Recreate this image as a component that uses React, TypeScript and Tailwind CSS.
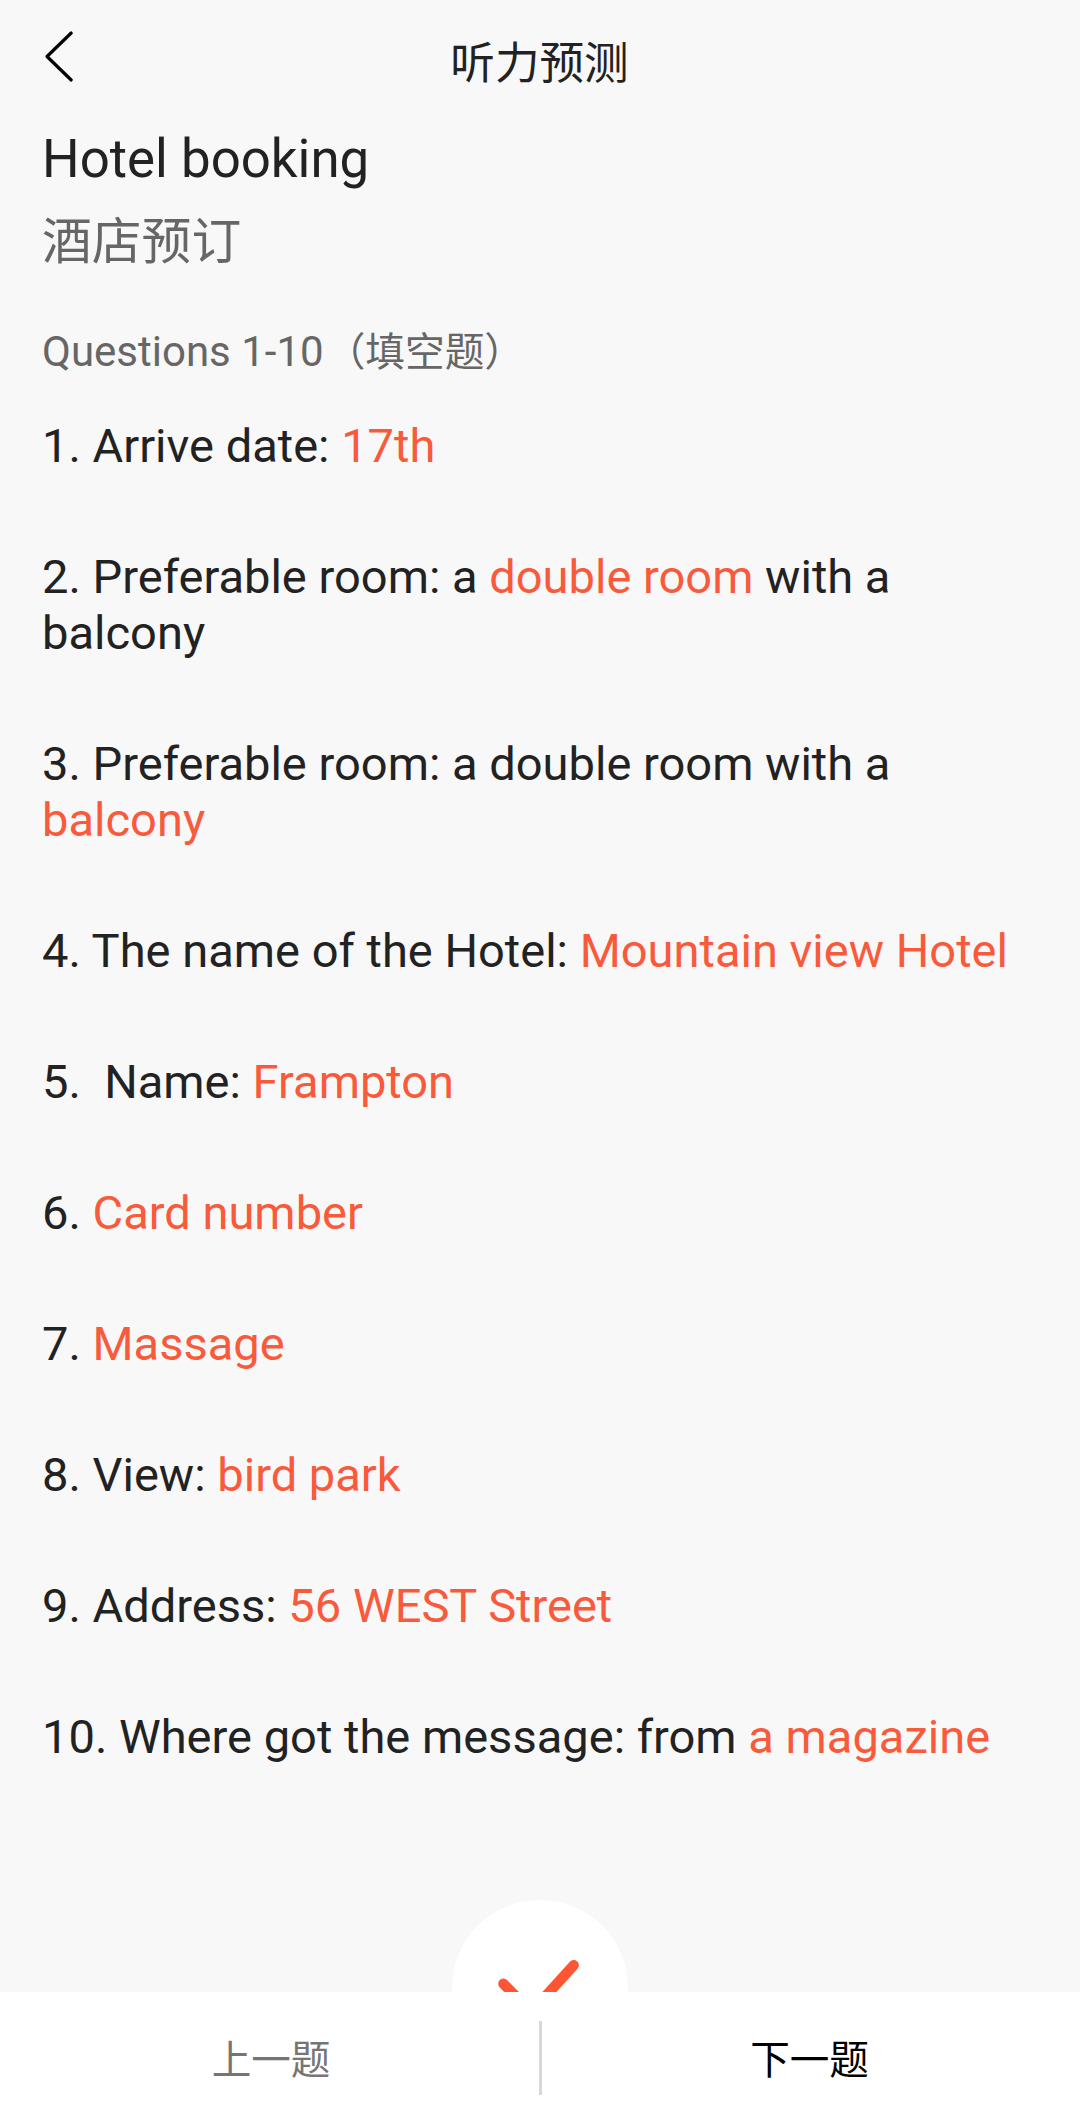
import { Fragment } from 'react'

interface Part {
  text: string
  answer?: boolean
}

const questions: Part[][] = [
  [{ text: '1. Arrive date: ' }, { text: '17th', answer: true }],
  [{ text: '2. Preferable room: a ' }, { text: 'double room', answer: true }, { text: ' with a balcony' }],
  [{ text: '3. Preferable room: a double room with a ' }, { text: 'balcony', answer: true }],
  [{ text: '4. The name of the Hotel: ' }, { text: 'Mountain view Hotel', answer: true }],
  [{ text: '5.  Name: ' }, { text: 'Frampton', answer: true }],
  [{ text: '6. ' }, { text: 'Card number', answer: true }],
  [{ text: '7. ' }, { text: 'Massage', answer: true }],
  [{ text: '8. View: ' }, { text: 'bird park', answer: true }],
  [{ text: '9. Address: ' }, { text: '56 WEST Street', answer: true }],
  [{ text: '10. Where got the message: from ' }, { text: 'a magazine', answer: true }],
]

function Header() {
  return (
    <header className="relative flex h-[124px] items-center justify-center">
      <button className="absolute left-[36px] top-[24px]" aria-label="Back">
        <svg width="48" height="64" viewBox="0 0 48 64" fill="none" stroke="#000" strokeWidth="3.2" strokeLinecap="round" strokeLinejoin="round">
          <path d="M35.2 9 11 32.5 35.2 56" />
        </svg>
      </button>
      <h1 className="pr-px pt-[3px] text-[44.6px] leading-[60px] text-[#222222]">听力预测</h1>
    </header>
  )
}

function BottomBar() {
  return (
    <nav className="flex h-[131px] shrink-0 bg-white pt-[29px] text-[39.6px] leading-[80px]">
      <button className="h-[74px] w-[539px] indent-[3px] text-[#757575]">上一题</button>
      <div className="h-[74px] w-[3px] bg-[#d8d8d8]" />
      <button className="h-[74px] flex-1 -indent-[3px] text-black">下一题</button>
    </nav>
  )
}

export default function App() {
  return (
    <div className="flex h-[2123px] w-[1080px] flex-col overflow-hidden bg-[#f8f8f8] font-[Roboto,'Noto_Sans_CJK_SC',sans-serif] text-[#222222]">
      <Header />

      <main className="relative flex-1 overflow-hidden px-[42px]">
        <h2 className="pt-[3px] text-[52.8px] leading-[64px]">Hotel booking</h2>
        <p className="mt-[15px] text-[49.8px] leading-[72px] text-[#666666]">酒店预订</p>
        <p className="mt-[44px] h-[60px] text-[42px] leading-[60px] text-[#666666]">
          Questions 1-10<span className="ml-[2px] text-[39.7px]">（填空题）</span>
        </p>

        {/* Questions with the answers highlighted */}
        <div className="mt-[36px] flex flex-col gap-[75px] whitespace-pre-wrap text-[47.05px] leading-[56px]">
          {questions.map((parts, i) => (
            <p key={i}>
              {parts.map((part, j) => (
                <Fragment key={j}>
                  {part.answer ? <span className="text-[#f95a3b]">{part.text}</span> : part.text}
                </Fragment>
              ))}
            </p>
          ))}
        </div>

        {/* Check button, partly hidden behind the bottom bar */}
        <button className="absolute left-[452px] top-[1776px] h-[176px] w-[176px] rounded-full bg-white" aria-label="Done">
          <svg width="176" height="176" viewBox="0 0 176 176" fill="none" stroke="#ff5533" strokeWidth="10.4" strokeLinecap="round" strokeLinejoin="round">
            <path d="M51.4 83.8 79.4 111.8 121.7 65.3" />
          </svg>
        </button>
      </main>

      <BottomBar />
    </div>
  )
}
